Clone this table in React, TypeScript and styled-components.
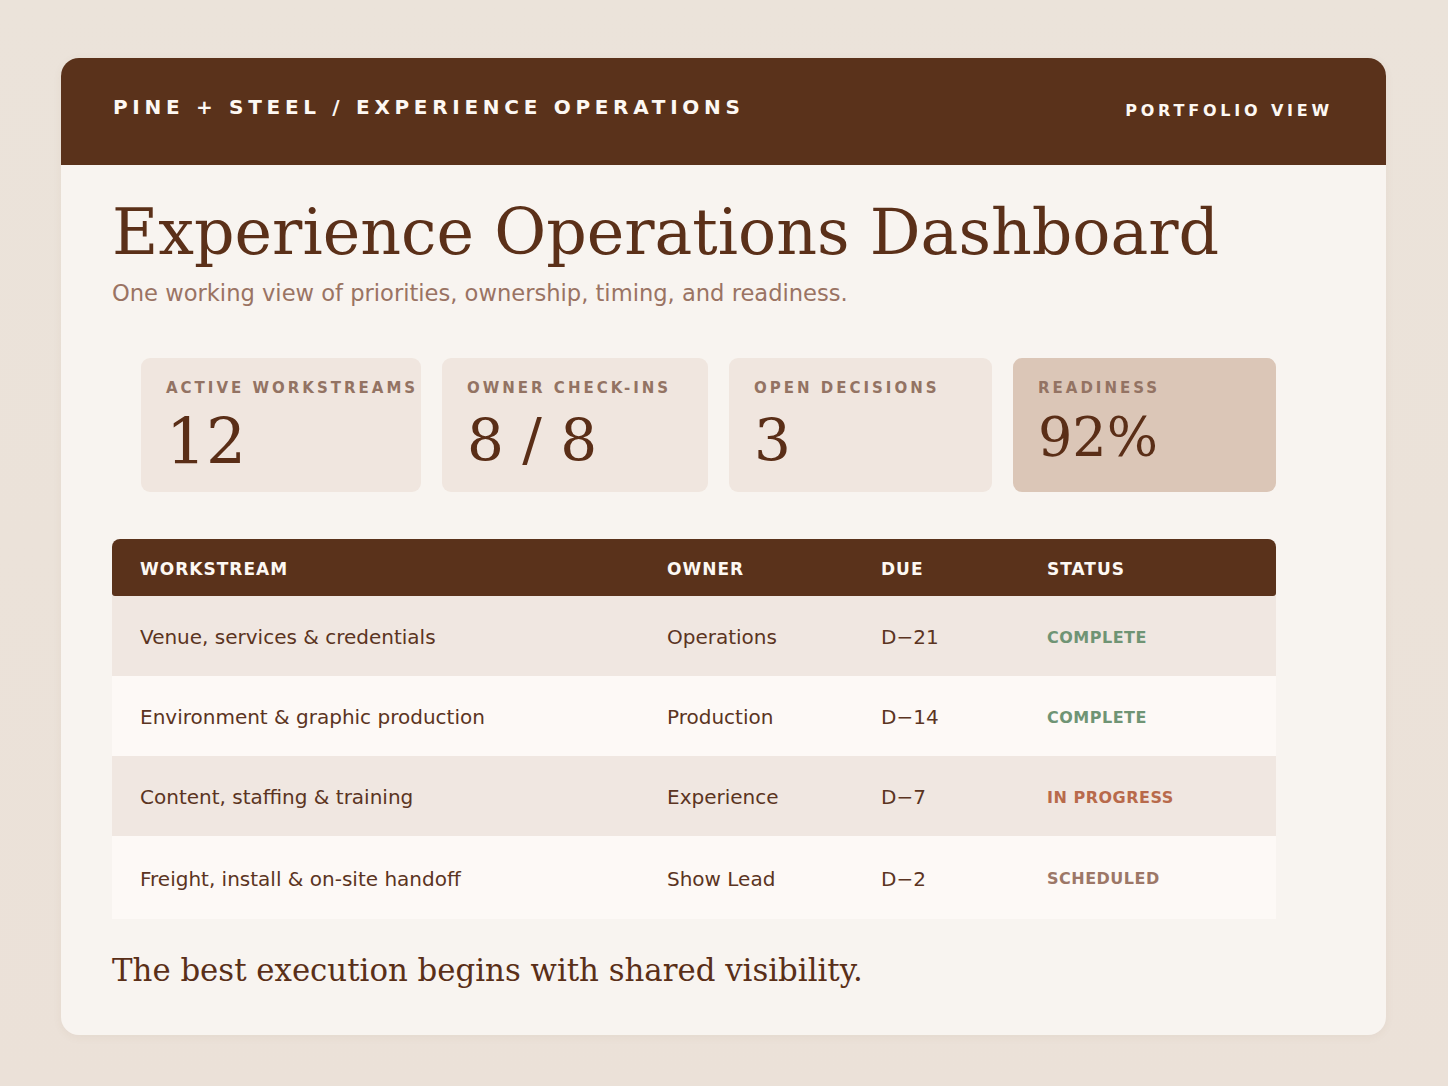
import React from 'react';
import styled, { createGlobalStyle } from 'styled-components';

const GlobalStyle = createGlobalStyle`
  * {
    box-sizing: border-box;
  }
  body {
    margin: 0;
    background: linear-gradient(180deg, #ebe3da 0%, #ebe1d8 100%);
    font-family: 'DejaVu Sans', 'Noto Sans', sans-serif;
    color: #5a321d;
  }
`;

const Page = styled.div`
  min-height: 1086px;
  padding: 58px 0 52px 61px;
`;

const Card = styled.div`
  width: 1325px;
  background: #f8f4f0;
  border-radius: 18px;
  overflow: hidden;
  box-shadow: 0 2px 10px rgba(120, 80, 50, 0.06);
`;

const TopBar = styled.header`
  height: 107px;
  background: #5a321b;
  display: flex;
  align-items: center;
  justify-content: space-between;
  padding: 0 52px 10px;
  color: #fdf8f3;
  font-weight: 700;
`;

const Brand = styled.div`
  font-size: 20px;
  letter-spacing: 4.7px;
`;

const ViewLabel = styled.div`
  font-size: 16px;
  letter-spacing: 3.8px;
  margin-top: 8px;
  margin-right: 1px;
`;

const Content = styled.main`
  padding: 33px 110px 46px 51px;
`;

const Title = styled.h1`
  margin: 0;
  font-family: 'DejaVu Serif', 'Liberation Serif', serif;
  font-weight: 400;
  font-size: 63.4px;
  line-height: 1.1;
  color: #5b3019;
`;

const Subtitle = styled.p`
  margin: 11px 0 0;
  font-size: 22.6px;
  line-height: 1.3;
  color: #9a7363;
`;

const Stats = styled.section`
  margin: 50px 0 0 29px;
  display: grid;
  grid-template-columns: 280fr 266fr 263fr 263fr;
  column-gap: 21px;
`;

const StatCard = styled.div<{ $accent?: boolean }>`
  height: 134px;
  border-radius: 9px;
  background: ${({ $accent }) => ($accent ? '#dbc6b7' : '#f0e6df')};
  padding: 21px 0 0 25px;
  overflow: hidden;
`;

const StatLabel = styled.div`
  font-size: 15px;
  line-height: 18px;
  font-weight: 700;
  letter-spacing: 3px;
  color: #937363;
  white-space: nowrap;
`;

const StatValue = styled.div<{ $size: number }>`
  margin-top: 14px;
  font-family: 'DejaVu Serif', 'Liberation Serif', serif;
  font-size: ${({ $size }) => $size}px;
  line-height: 1;
  color: #5a2e17;
  white-space: nowrap;
`;

const Table = styled.section`
  margin-top: 47px;
`;

const columns = '527px 214px 166px 1fr';

const HeadRow = styled.div`
  display: grid;
  grid-template-columns: ${columns};
  height: 57px;
  padding-top: 3px;
  align-items: center;
  background: #5a321b;
  border-radius: 8px 8px 3px 3px;
  color: #fdf8f3;
  font-size: 17px;
  font-weight: 700;
  letter-spacing: 1px;
`;

const Row = styled.div<{ $shade?: boolean; $tall?: boolean }>`
  display: grid;
  grid-template-columns: ${columns};
  height: ${({ $tall }) => ($tall ? '83px' : '80px')};
  padding-top: 2px;
  align-items: center;
  background: ${({ $shade }) => ($shade ? '#f0e7e1' : '#fdf9f6')};
  font-size: 20px;
  color: #5b3422;
`;

const Cell = styled.div`
  padding-left: 28px;
  white-space: nowrap;
`;

const statusColors: Record<string, string> = {
  COMPLETE: '#6f9474',
  'IN PROGRESS': '#b86a4b',
  SCHEDULED: '#9c7767',
};

const Status = styled(Cell)<{ $tone: string }>`
  font-size: 16px;
  font-weight: 700;
  letter-spacing: 0.5px;
  color: ${({ $tone }) => $tone};
`;

const Closing = styled.p`
  margin: 33px 0 0;
  font-family: 'DejaVu Serif', 'Liberation Serif', serif;
  font-size: 30.8px;
  line-height: 1.2;
  color: #5a2f18;
`;

const stats = [
  { label: 'ACTIVE WORKSTREAMS', value: '12', size: 63 },
  { label: 'OWNER CHECK-INS', value: '8 / 8', size: 58 },
  { label: 'OPEN DECISIONS', value: '3', size: 58 },
  { label: 'READINESS', value: '92%', size: 54, accent: true },
];

const rows = [
  { name: 'Venue, services & credentials', owner: 'Operations', due: 'D\u221221', status: 'COMPLETE' },
  { name: 'Environment & graphic production', owner: 'Production', due: 'D\u221214', status: 'COMPLETE' },
  { name: 'Content, staffing & training', owner: 'Experience', due: 'D\u22127', status: 'IN PROGRESS' },
  { name: 'Freight, install & on-site handoff', owner: 'Show Lead', due: 'D\u22122', status: 'SCHEDULED' },
];

const App: React.FC = () => {
  return (
    <Page>
      <GlobalStyle />
      <Card>
        <TopBar>
          <Brand>PINE + STEEL / EXPERIENCE OPERATIONS</Brand>
          <ViewLabel>PORTFOLIO VIEW</ViewLabel>
        </TopBar>
        <Content>
          <Title>Experience Operations Dashboard</Title>
          <Subtitle>One working view of priorities, ownership, timing, and readiness.</Subtitle>

          <Stats>
            {stats.map((s) => (
              <StatCard key={s.label} $accent={s.accent}>
                <StatLabel>{s.label}</StatLabel>
                <StatValue $size={s.size}>{s.value}</StatValue>
              </StatCard>
            ))}
          </Stats>

          <Table>
            <HeadRow>
              <Cell>WORKSTREAM</Cell>
              <Cell>OWNER</Cell>
              <Cell>DUE</Cell>
              <Cell>STATUS</Cell>
            </HeadRow>
            {rows.map((r, i) => (
              <Row key={r.name} $shade={i % 2 === 0} $tall={i === rows.length - 1}>
                <Cell>{r.name}</Cell>
                <Cell>{r.owner}</Cell>
                <Cell>{r.due}</Cell>
                <Status $tone={statusColors[r.status]}>{r.status}</Status>
              </Row>
            ))}
          </Table>

          <Closing>The best execution begins with shared visibility.</Closing>
        </Content>
      </Card>
    </Page>
  );
};

export default App;
